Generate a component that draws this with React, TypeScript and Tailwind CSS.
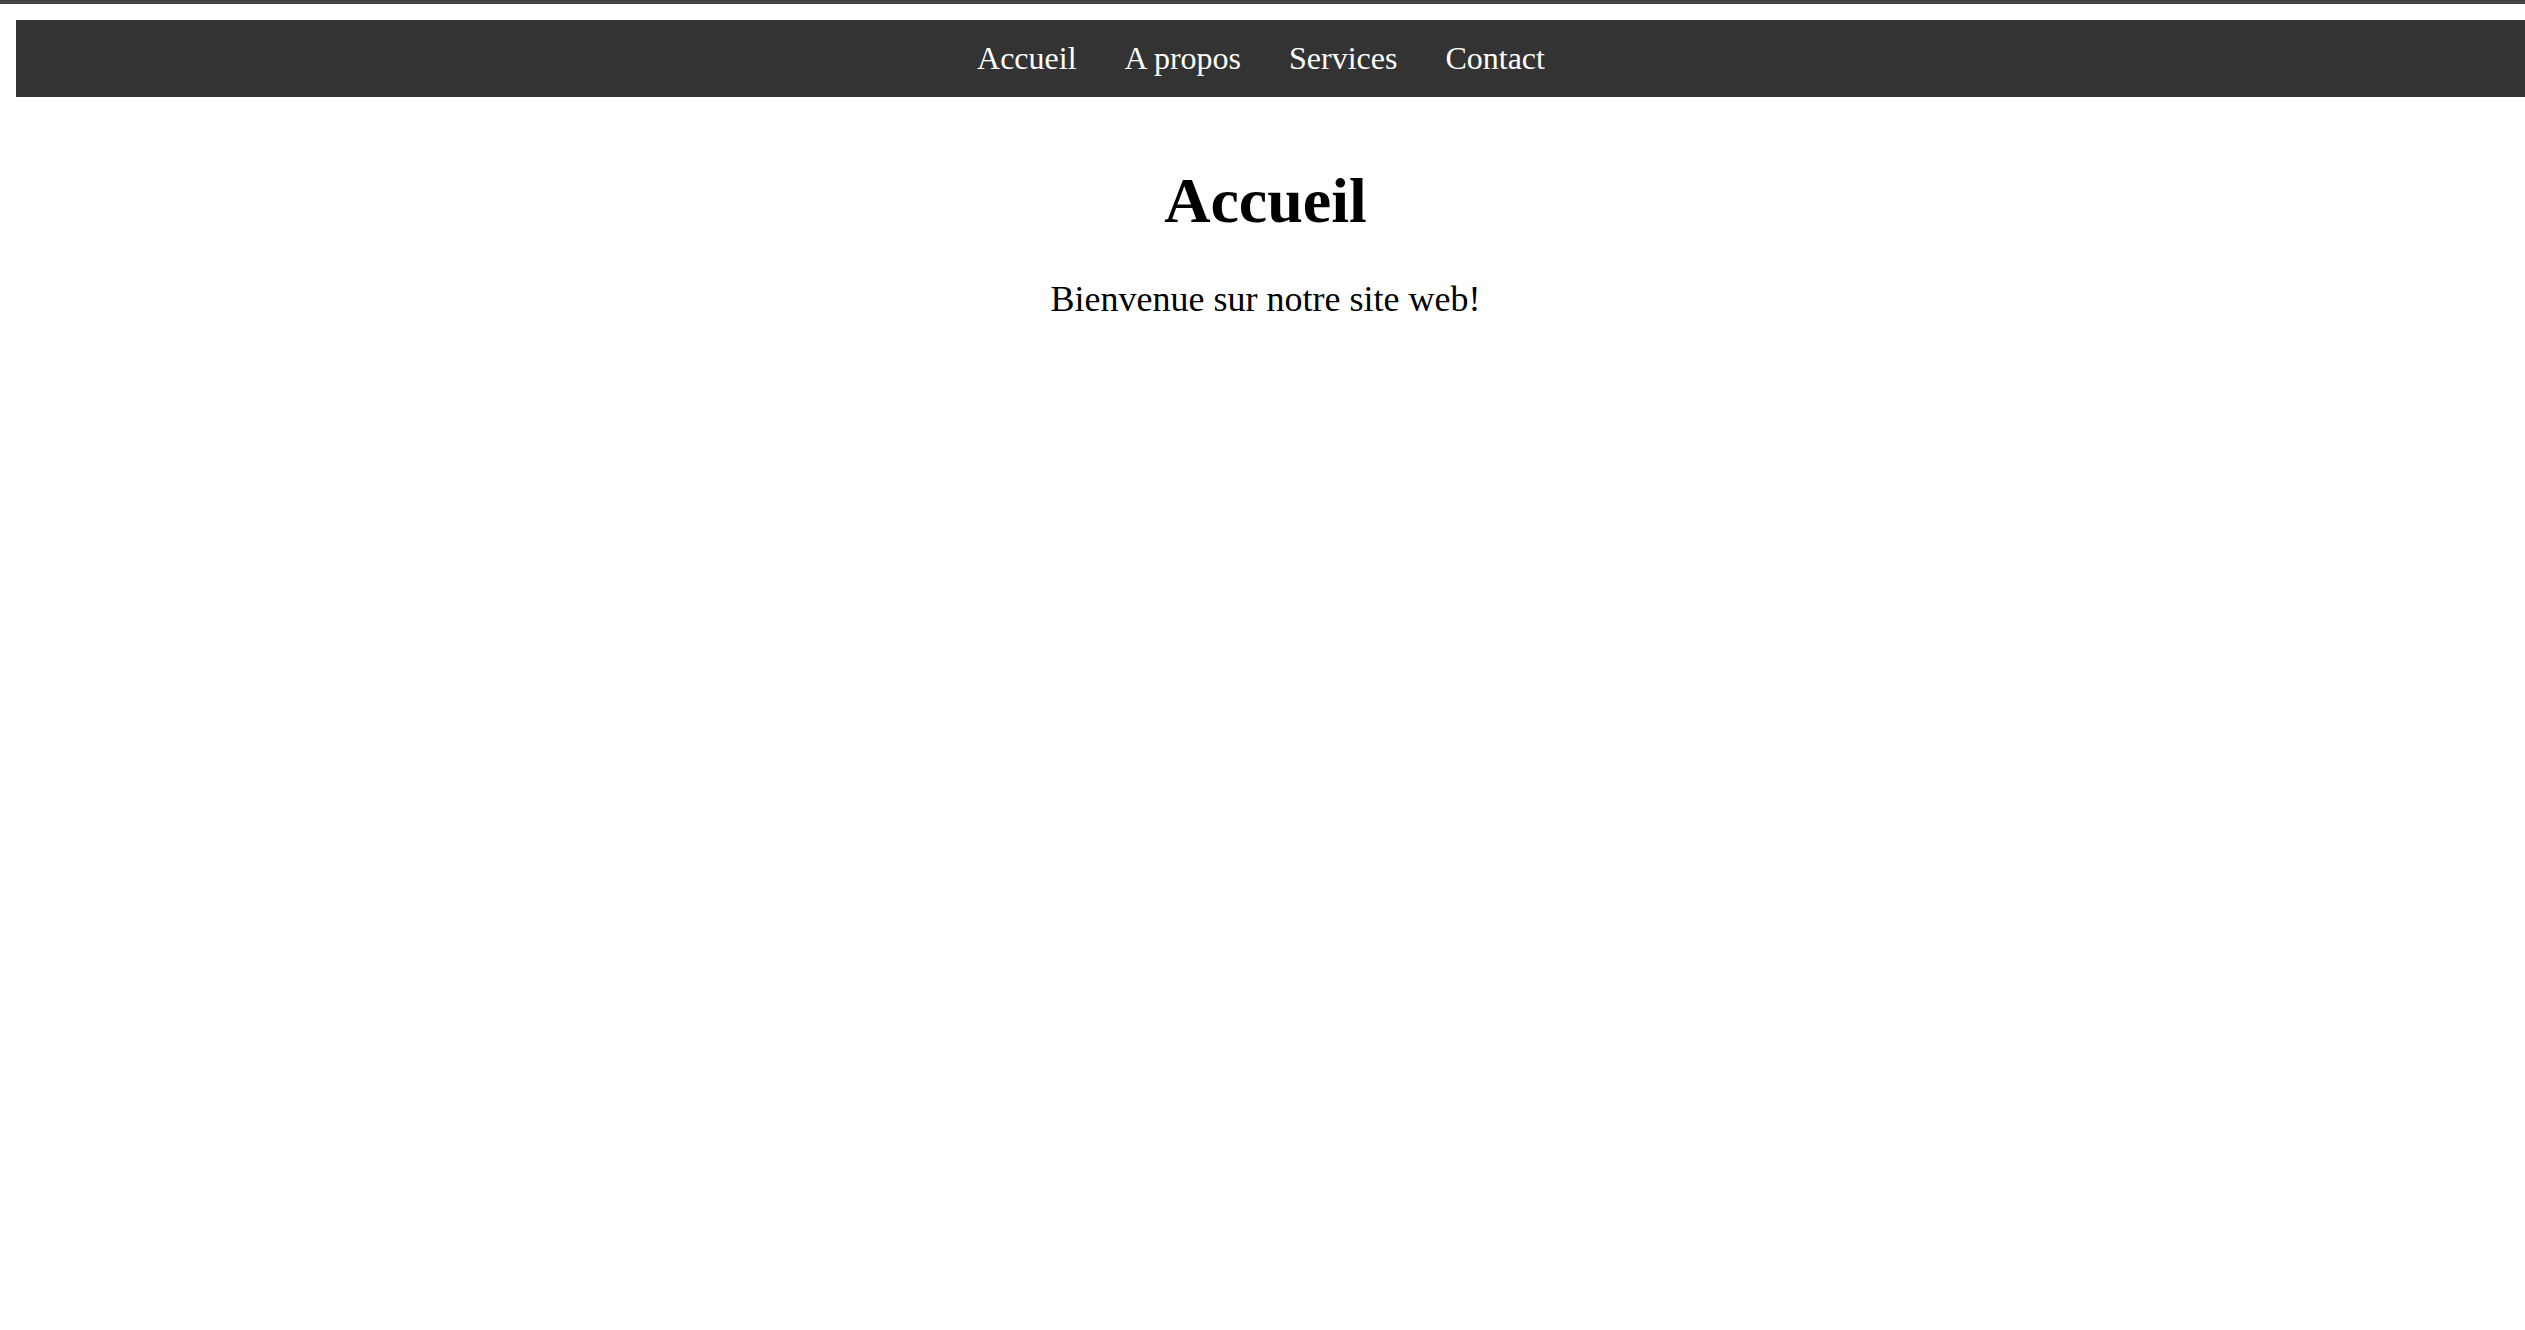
import React from "react";

const links = ["Accueil", "A propos", "Services", "Contact"];

export default function App() {
  return (
    <div className="min-h-screen bg-white font-['Liberation_Serif','Times_New_Roman',serif] text-black">
      <div className="h-[4px] bg-gradient-to-b from-[#3a3a3a] via-[#4a4a4a] to-[#3f3f3f]" />

      <nav className="ml-4 mt-4 flex h-[77px] items-center justify-center bg-[#333333] pr-[19px]">
        <ul className="flex gap-[48px]">
          {links.map((l) => (
            <li key={l}>
              <a href="#" className="text-[32px] leading-[37px] text-white">
                {l}
              </a>
            </li>
          ))}
        </ul>
      </nav>

      <main className="flex flex-col items-center pl-[6px] pt-[67px]">
        <h1 className="text-[64px] font-bold leading-[74px]">Accueil</h1>
        <p className="mt-[41px] text-[36px] leading-[41px]">Bienvenue sur notre site web!</p>
      </main>
    </div>
  );
}
